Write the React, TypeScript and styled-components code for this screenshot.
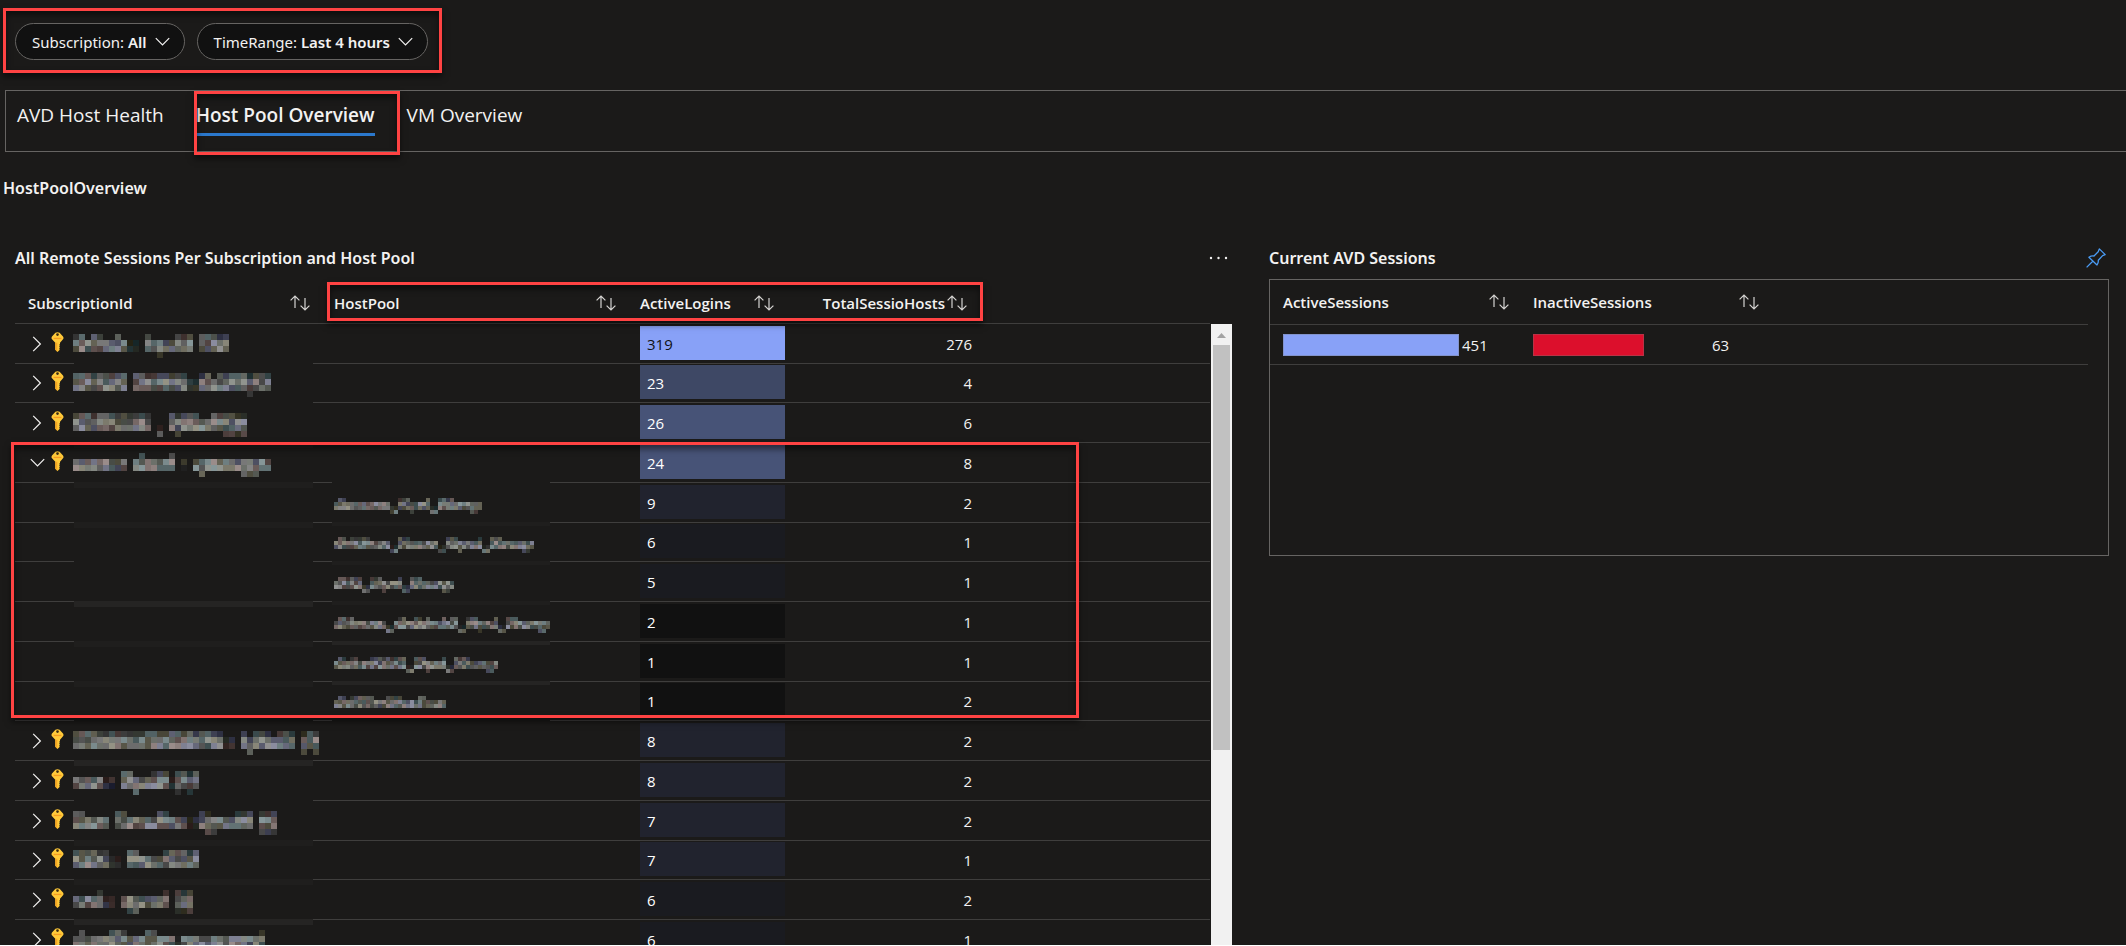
import React from 'react';
import styled, { createGlobalStyle } from 'styled-components';

const color = {
  page: '#1b1a19',
  pill: '#111111',
  text: '#f3f2f1',
  line: '#3f3e3d',
  frame: '#666462',
  accent: '#2b78cc',
  mark: '#ff4343',
  periwinkle: '#88a1f7',
  crimson: '#dc0f2c',
};

const headingFont = "'Noto Sans', 'Open Sans', sans-serif";

const GlobalStyle = createGlobalStyle`
  * { box-sizing: border-box; }
  body {
    margin: 0;
    background: ${color.page};
    color: ${color.text};
    font-family: 'Open Sans', 'Noto Sans', sans-serif;
    font-size: 15px;
    line-height: 20px;
  }
  button { font: inherit; color: inherit; background: none; border: 0; padding: 0; cursor: pointer; }
`;

const Page = styled.main`
  height: 100vh;
  overflow: hidden;
  display: flex;
  flex-direction: column;
  border-bottom: 1px solid #ffffff;
`;

const Highlight = styled.div<{ $top: number; $left: number; $width: number; $height: number }>`
  position: absolute;
  top: ${(p) => p.$top}px;
  left: ${(p) => p.$left}px;
  width: ${(p) => p.$width}px;
  height: ${(p) => p.$height}px;
  border: 3px solid ${color.mark};
  box-shadow: 0 4px 6px rgba(0, 0, 0, 0.5), inset 0 4px 6px rgba(0, 0, 0, 0.5);
  pointer-events: none;
`;

const FilterBar = styled.div`
  position: relative;
  display: flex;
  gap: 12px;
  padding: 23px 15px 30px;
`;

const Pill = styled.button`
  && {
    display: flex;
    align-items: center;
    gap: 8px;
    height: 37px;
    padding: 0 14px 0 16px;
    border: 1px solid ${color.frame};
    border-radius: 19px;
    background: ${color.pill};
    font-family: ${headingFont};
    white-space: pre;
  }
  b { font-weight: 600; }
`;

const TabBar = styled.nav`
  position: relative;
  display: flex;
  gap: 32px;
  height: 62px;
  flex: none;
  margin-left: 5px;
  padding: 11px 11px 0;
  border: 1px solid ${color.frame};
  border-right: 0;
`;

const Tab = styled.button<{ $active?: boolean }>`
  && {
    height: 34px;
    padding-bottom: 6px;
    font-size: 19px;
    line-height: 24px;
    font-weight: ${(p) => (p.$active ? 600 : 400)};
    border-bottom: 3px solid ${(p) => (p.$active ? color.accent : 'transparent')};
  }
`;

const PageTitle = styled.h1`
  margin: 24px 0 0 3px;
  font-family: ${headingFont};
  font-size: 16px;
  line-height: 24px;
  font-weight: 600;
`;

const Panels = styled.div`
  flex: 1;
  min-height: 0;
  display: grid;
  grid-template-columns: minmax(0, 1217fr) minmax(0, 840fr);
  gap: 37px;
  padding: 46px 17px 0 15px;
`;

const Panel = styled.section`
  display: flex;
  flex-direction: column;
  min-height: 0;
`;

const PanelHeader = styled.header<{ $gap: number }>`
  display: flex;
  justify-content: space-between;
  align-items: center;
  height: 24px;
  flex: none;
  margin-bottom: ${(p) => p.$gap}px;
  padding-right: 3px;
  h2 { margin: 0; font-family: ${headingFont}; font-size: 16px; line-height: 24px; font-weight: 600; }
  button { display: flex; }
`;

const GridFrame = styled.div`
  position: relative;
  flex: 1;
  min-height: 0;
`;

const GridScroll = styled.div`
  display: flex;
  gap: 1px;
  height: 100%;
  overflow: hidden;
`;

const DataTable = styled.table<{ $head: number; $headPad: number }>`
  width: 100%;
  flex: 1;
  align-self: flex-start;
  table-layout: fixed;
  border-collapse: separate;
  border-spacing: 0;
  th, td {
    position: relative;
    padding: 0 0 0 13px;
    border-bottom: 1px solid ${color.line};
    text-align: left;
    vertical-align: middle;
  }
  th {
    height: ${(p) => p.$head}px;
    padding-right: 11px;
    padding-bottom: ${(p) => p.$headPad}px;
    font-weight: 600;
  }
  td { height: 40px; }
  tbody tr:nth-child(4n + 2) td { height: 39px; }
`;

const Col = styled.col<{ $width?: number }>`
  width: ${(p) => (p.$width ? `${p.$width}px` : 'auto')};
`;

const HeadCell = styled.div<{ $end?: boolean }>`
  display: flex;
  align-items: center;
  justify-content: ${(p) => (p.$end ? 'flex-end' : 'space-between')};
  gap: 2px;
  button { display: flex; }
`;

const NameCell = styled.div`
  display: flex;
  align-items: flex-start;
  gap: 9px;
  height: 30px;
  button { display: flex; width: 18px; height: 16px; margin-top: 7px; justify-content: center; align-items: center; }
  button + svg { margin: 3px 0 0 -4px; }
`;

const Mosaic = styled.svg<{ $offset: number }>`
  display: block;
  margin-top: ${(p) => p.$offset}px;
`;

const MaskStrip = styled.span<{ $left: number; $width: number; $height: number; $level: number }>`
  position: absolute;
  left: ${(p) => p.$left}px;
  bottom: ${(p) => -p.$height}px;
  width: ${(p) => p.$width}px;
  height: ${(p) => p.$height}px;
  background: ${(p) => ['#1b1a19', '#1f1e1d', '#252423'][p.$level]};
`;

const Heat = styled.div<{ $tone: string; $dark?: boolean }>`
  display: flex;
  align-items: center;
  height: 34px;
  margin-bottom: 2px;
  padding: 2px 7px 0;
  background: ${(p) => p.$tone};
  color: ${(p) => (p.$dark ? '#111111' : '#ffffff')};
`;

const Total = styled.div`
  padding: 0 6px 0 0;
  text-align: right;
`;

const Scrollbar = styled.div`
  width: 21px;
  flex: none;
  margin-top: 40px;
  padding: 0 2px;
  background: #f1f1f1;
  display: flex;
  flex-direction: column;
  svg { display: block; height: 21px; }
`;

const Thumb = styled.div`
  height: 405px;
  background: #c1c1c1;
`;

const Frame = styled.div`
  height: 277px;
  padding-right: 20px;
  border: 1px solid ${color.frame};
`;

const BarCell = styled.div`
  display: flex;
  align-items: center;
  gap: 3px;
`;

const BarTrack = styled.div`
  width: 176px;
`;

const Bar = styled.div<{ $tone: string }>`
  height: 22px;
  background: ${(p) => p.$tone};
  border: 1px solid rgba(120, 120, 120, 0.35);
`;

const ChevronDown = () => (
  <svg width="15" height="10" viewBox="0 0 15 10" fill="none" stroke={color.text} strokeWidth="1.2">
    <path d="M0.8 1.2 7.5 8 14.2 1.2" />
  </svg>
);

const ChevronRight = () => (
  <svg width="10" height="16" viewBox="0 0 10 16" fill="none" stroke={color.text} strokeWidth="1.2">
    <path d="M1.2 0.8 8.4 8 1.2 15.2" />
  </svg>
);

const SortIcon = () => (
  <svg width="20" height="16" viewBox="0 0 20 16" fill="none" stroke="#d6d4d2" strokeWidth="1.2">
    <path d="M5 13V1.2M0.6 5.4 5 1l4.400 4.400M15 3v11.800M10.600 10.600 15 15l4.400-4.400" />
  </svg>
);

const KeyIcon = () => (
  <svg width="13" height="20" viewBox="0 0 13 20">
    <path
      d="M4.400 0.800Q6.500-.4 8.600.8L12 4.600Q13 5.900 12 7.200L9 10.800V12l-.9.900.9.900-.9 1 .9 1-.9 1 .7.900L6.500 20 4.300 17.800V10.800L1 7.200Q0 5.900 1 4.600Z"
      fill="#ffca3a"
    />
    <path d="M4.300 10.800h2v9L4.300 17.800Z" fill="#f5a623" />
    <path d="M2.600 5.800h7.800v1.300H2.600Z" fill="#f59b23" />
    <circle cx="6.500" cy="2.600" r="1.300" fill="#3a2a10" />
  </svg>
);

const PinIcon = () => (
  <svg width="20" height="20" viewBox="0 0 20 20" fill="none" stroke="#4a9cf5" strokeWidth="1.300" strokeLinejoin="round">
    <path d="M0.600 19.400 7 13M13.300 0.900 19.200 6.600 16.600 7.600 12.300 12.200Q12.600 14.600 11 17L2.900 9.200Q5.400 7.600 8 8L12.200 3.700Z" />
  </svg>
);

const MoreIcon = () => (
  <svg width="20" height="4" viewBox="0 0 20 4" fill={color.text}>
    <circle cx="2" cy="2" r="1.200" />
    <circle cx="9.500" cy="2" r="1.200" />
    <circle cx="17" cy="2" r="1.200" />
  </svg>
);

/* Each character of a profile is one mosaic column: T tall, x short, g with a
   descender, G tall with a descender, _ bottom only, - faint dash. */
const rowsOf: Record<string, number[]> = {
  T: [3, 5, 5, 0],
  x: [0, 5, 5, 0],
  g: [0, 5, 5, 3],
  G: [2, 5, 4, 2],
  _: [0, 0, 1, 4],
  '-': [0, 1, 1, 0],
};

function Redacted({ profile, cell, offset, seed }: { profile: string; cell: number; offset: number; seed: number }) {
  const cells: React.ReactNode[] = [];
  profile.split('').forEach((kind, x) => {
    (rowsOf[kind] || []).forEach((level, y) => {
      if (!level) return;
      const n = (x * 73 + y * 151 + seed * 97 + ((x * x * 31) ^ (seed * 13 + y * 7))) % 211;
      const base = 22 + level * 10 + ((n % 7) * 2 * (level + 1));
      const tint = [[0, 0, 0], [10, -4, -6], [-10, 6, 8], [4, 2, -12], [-6, -4, 14], [0, 4, -2]][n % 6];
      const fill = `rgb(${base + tint[0]}, ${base + tint[1]}, ${base + tint[2]})`;
      cells.push(<rect key={`${x}-${y}`} x={x * cell} y={y * cell} width={cell} height={cell} fill={fill} />);
    });
  });
  return (
    <Mosaic
      $offset={offset}
      width={profile.length * cell}
      height={cell * 4}
      shapeRendering="crispEdges"
      role="img"
      aria-label="Redacted name"
    >
      {cells}
    </Mosaic>
  );
}

type Row = {
  name?: string;
  pool?: string;
  open?: boolean;
  logins: number;
  hosts: number;
  tone: string;
  strip: number;
  poolStrip?: number;
};

const rows: Row[] = [
  { name: 'TTxTTxxTx-- TxgxxTTT TTTTT', logins: 319, hosts: 276, tone: color.periwinkle, strip: 0 },
  { name: 'TTTTTTTTT TTTTTTTTT--TTxTTTTTGTTT', logins: 23, hosts: 4, tone: '#3e4865', strip: 0 },
  { name: 'TTTTTTTTTTTTT _ TGTTTxxTTGGGG', logins: 26, hosts: 6, tone: '#475377', strip: 1 },
  { name: 'xxxxxxxxx xTxxxxT - xgxxxxxxgggxx', open: true, logins: 24, hosts: 8, tone: '#475377', strip: 1, poolStrip: 0 },
  { pool: 'xTTxxxxxxxxxxx__TTTgxxxT__TTTTxxxxggx', logins: 9, hosts: 2, tone: '#21232e', strip: 1, poolStrip: 1 },
  { pool: 'xTTxTTTTTxxxxx__TTTxxxxxxx__TTTgxxxxT__TTTxxxxxggx', logins: 6, hosts: 1, tone: '#1a1b20', strip: 0, poolStrip: 1 },
  { pool: 'xTTTTTT__TTTgxxxT__TTTxxxxxggx', logins: 5, hosts: 1, tone: '#1a1b20', strip: 2, poolStrip: 1 },
  { pool: 'xTTTTxxxxxxxx__xTTxxTTxTxxxTxTT__TTTgxxxT__TTTxxxxxggx', logins: 2, hosts: 1, tone: '#111111', strip: 1, poolStrip: 2 },
  { pool: 'xTTxTTxxxTTTTTTTTT__TTTgxxxT__TTTTxxxxggx', logins: 1, hosts: 1, tone: '#111111', strip: 1, poolStrip: 2 },
  { pool: 'xTTxTTTTTTxxxTTTTxxxxTTxxxxx', logins: 1, hosts: 2, tone: '#111111', strip: 0, poolStrip: 0 },
  { name: 'TTTTTTTTTTTTTTTTTTTTTTTTT-- TgTTTxTTT GTG', logins: 8, hosts: 2, tone: '#21232e', strip: 2 },
  { name: 'xxxxx-- TTgxxTTT-GTGT', logins: 8, hosts: 2, tone: '#21232e', strip: 0 },
  { name: 'TTxxxx TTxxxxxTTxxx--TGgxxxTTT GGG', logins: 7, hosts: 2, tone: '#21232e', strip: 1 },
  { name: 'TTTTTT-- TTxxxxTTTTTT', logins: 7, hosts: 1, tone: '#21232e', strip: 1 },
  { name: 'xxxxT-- xggxxxxT GGG', logins: 6, hosts: 2, tone: '#1a1b20', strip: 2 },
  { name: 'xTxxxxTTTxxxTTxxx-xxxxxxxxxxxxxT', logins: 6, hosts: 1, tone: '#1a1b20', strip: 0 },
];

function SortHead({ label, end }: { label: string; end?: boolean }) {
  return (
    <th scope="col">
      <HeadCell $end={end}>
        {label}
        <button aria-label={`Sort by ${label}`}>
          <SortIcon />
        </button>
      </HeadCell>
    </th>
  );
}

function SessionRow({ row, index }: { row: Row; index: number }) {
  return (
    <tr>
      <td>
        {row.name && (
          <NameCell>
            <button aria-label={row.open ? 'Collapse' : 'Expand'} aria-expanded={!!row.open}>
              {row.open ? <ChevronDown /> : <ChevronRight />}
            </button>
            <KeyIcon />
            <Redacted profile={row.name} cell={6} offset={5} seed={index} />
          </NameCell>
        )}
        <MaskStrip $left={59} $width={239} $height={6} $level={row.strip} />
      </td>
      <td>
        {row.pool && <Redacted profile={row.pool} cell={4} offset={6} seed={index} />}
        {row.poolStrip !== undefined && <MaskStrip $left={11} $width={218} $height={4} $level={row.poolStrip} />}
      </td>
      <td>
        <Heat $tone={row.tone} $dark={row.logins > 300}>
          {row.logins}
        </Heat>
      </td>
      <td>
        <Total>{row.hosts}</Total>
      </td>
      <td />
    </tr>
  );
}

export default function App() {
  return (
    <>
      <GlobalStyle />
      <Page>
        <FilterBar>
          <Pill>
            <span>Subscription: <b>All</b></span>
            <ChevronDown />
          </Pill>
          <Pill>
            <span>TimeRange: <b>Last 4 hours</b></span>
            <ChevronDown />
          </Pill>
          <Highlight $top={8} $left={3} $width={439} $height={65} />
        </FilterBar>

        <TabBar>
          <Tab>AVD Host Health</Tab>
          <Tab $active>Host Pool Overview</Tab>
          <Tab>VM Overview</Tab>
          <Highlight $top={0} $left={188} $width={206} $height={64} />
        </TabBar>

        <PageTitle>HostPoolOverview</PageTitle>

        <Panels>
          <Panel>
            <PanelHeader $gap={14}>
              <h2>All Remote Sessions Per Subscription and Host Pool</h2>
              <button aria-label="More options">
                <MoreIcon />
              </button>
            </PanelHeader>
            <GridFrame>
              <GridScroll>
                <DataTable $head={40} $headPad={2}>
                  <colgroup>
                    <Col $width={306} />
                    <Col $width={306} />
                    <Col $width={158} />
                    <Col $width={193} />
                    <Col />
                  </colgroup>
                  <thead>
                    <tr>
                      <SortHead label="SubscriptionId" />
                      <SortHead label="HostPool" />
                      <SortHead label="ActiveLogins" />
                      <SortHead label="TotalSessioHosts" end />
                      <th />
                    </tr>
                  </thead>
                  <tbody>
                    {rows.map((row, i) => (
                      <SessionRow key={i} row={row} index={i} />
                    ))}
                  </tbody>
                </DataTable>
                <Scrollbar>
                  <svg viewBox="0 0 17 21" fill="#a3a3a3">
                    <path d="M4 14 8.500 9 13 14Z" />
                  </svg>
                  <Thumb />
                </Scrollbar>
              </GridScroll>
              <Highlight $top={-2} $left={312} $width={656} $height={39} />
              <Highlight $top={158} $left={-4} $width={1068} $height={276} />
            </GridFrame>
          </Panel>

          <Panel>
            <PanelHeader $gap={9}>
              <h2>Current AVD Sessions</h2>
              <button aria-label="Pin">
                <PinIcon />
              </button>
            </PanelHeader>
            <Frame>
              <DataTable $head={45} $headPad={0}>
                <colgroup>
                  <Col $width={250} />
                  <Col $width={250} />
                  <Col />
                </colgroup>
                <thead>
                  <tr>
                    <SortHead label="ActiveSessions" />
                    <SortHead label="InactiveSessions" />
                    <th />
                  </tr>
                </thead>
                <tbody>
                  <tr>
                    <td>
                      <BarCell>
                        <BarTrack>
                          <Bar $tone={color.periwinkle} style={{ width: '100%' }} />
                        </BarTrack>
                        451
                      </BarCell>
                    </td>
                    <td>
                      <BarCell>
                        <BarTrack>
                          <Bar $tone={color.crimson} style={{ width: '63%' }} />
                        </BarTrack>
                        63
                      </BarCell>
                    </td>
                    <td />
                  </tr>
                </tbody>
              </DataTable>
            </Frame>
          </Panel>
        </Panels>
      </Page>
    </>
  );
}
